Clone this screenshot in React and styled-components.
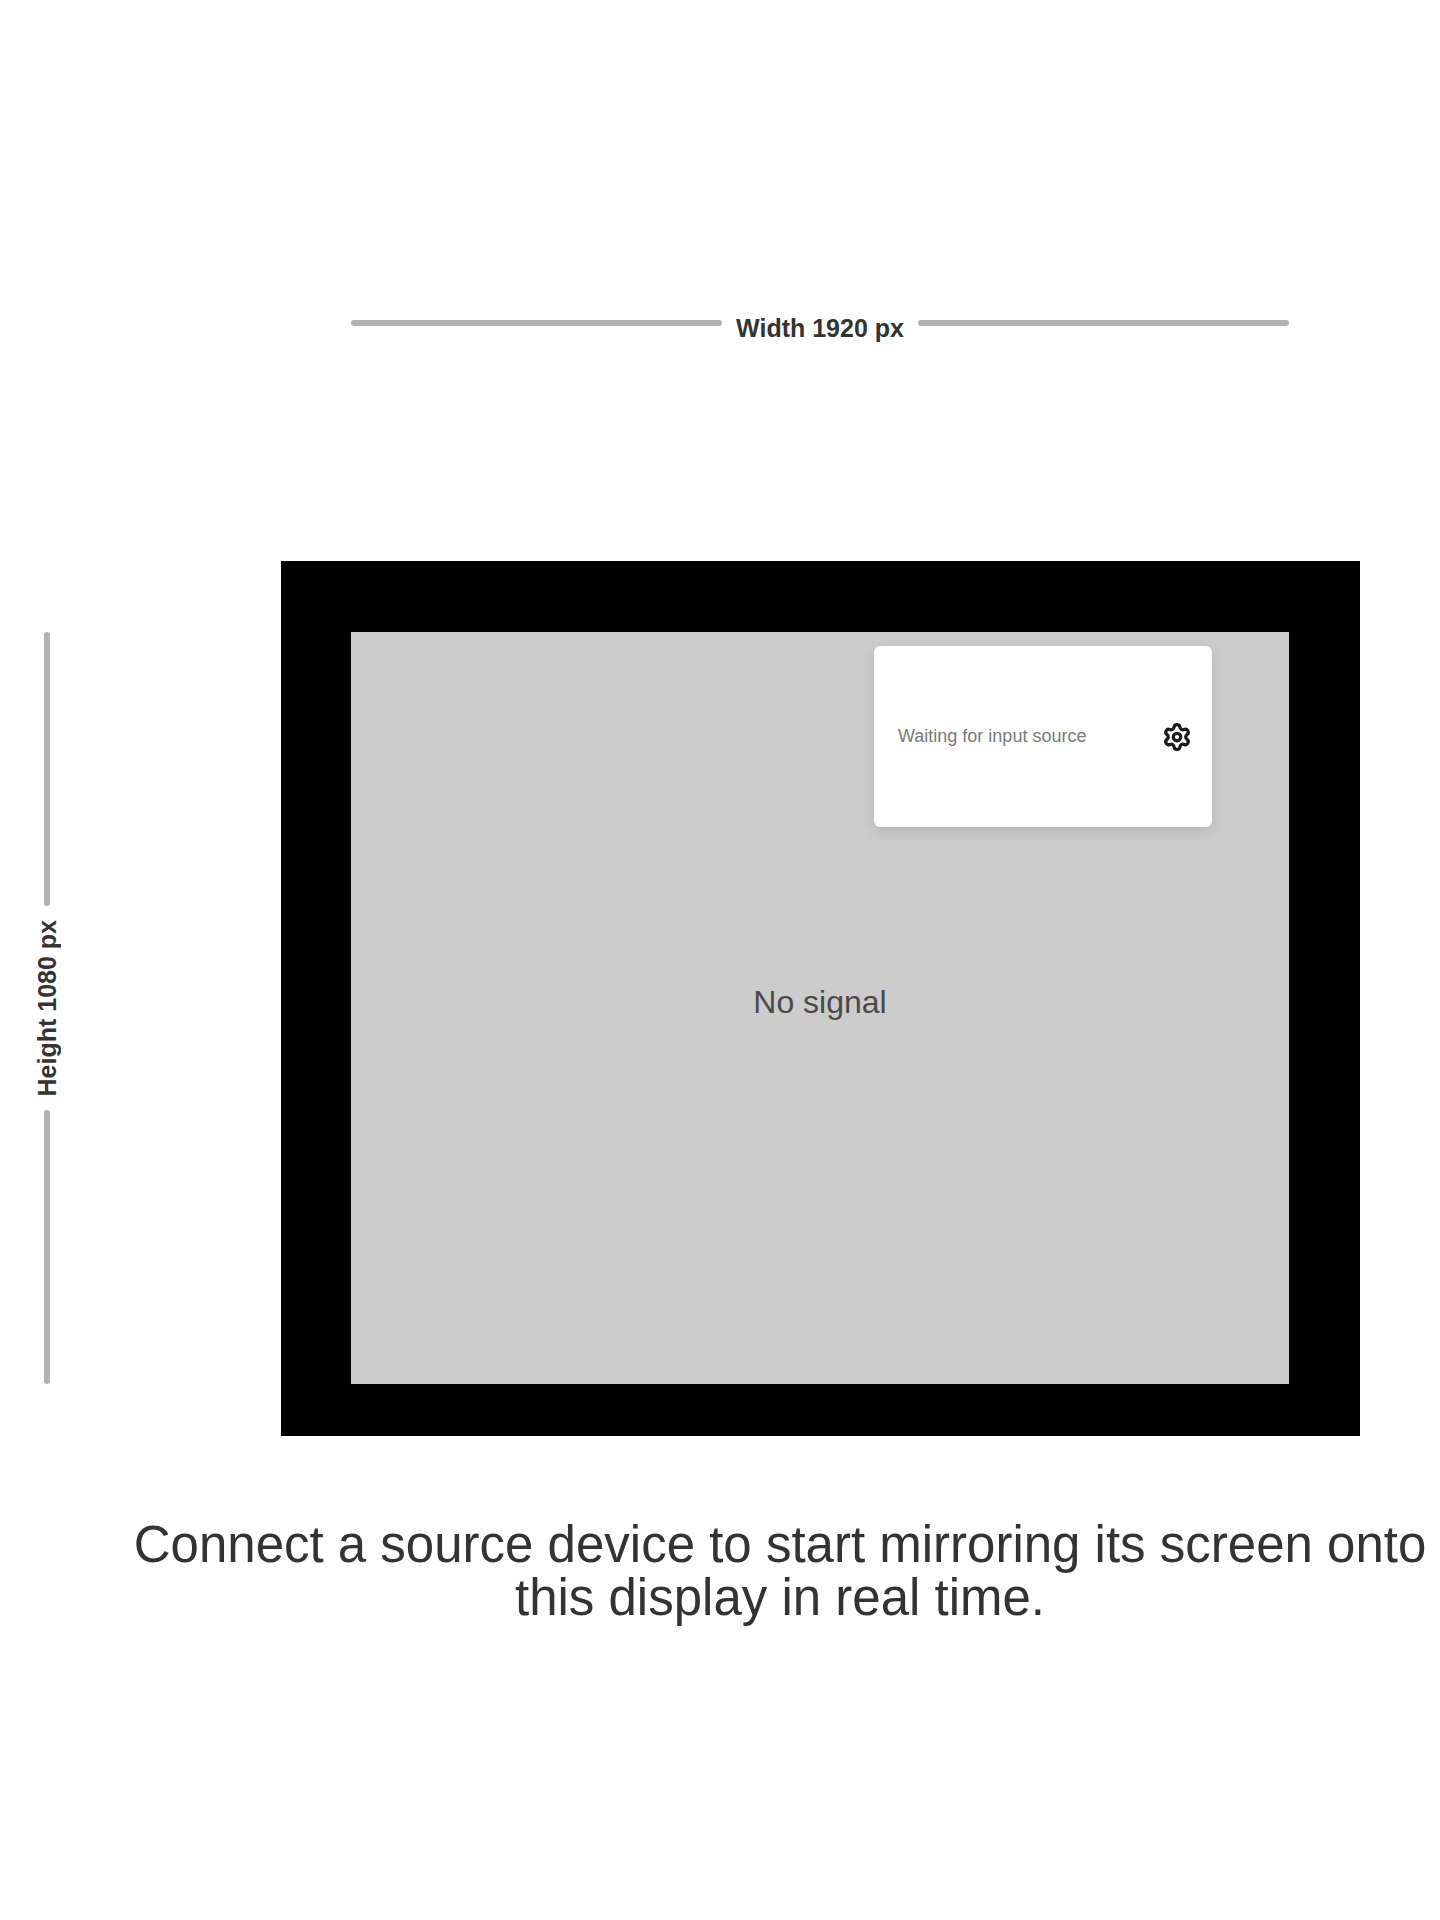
import React from 'react';
import styled, { createGlobalStyle } from 'styled-components';
import { Settings } from 'lucide-react';

const GlobalStyle = createGlobalStyle`
  html, body {
    margin: 0;
    padding: 0;
    background: #ffffff;
  }
  body {
    font-family: "Liberation Sans", Arial, sans-serif;
    color: #222;
  }
`;

const Page = styled.div`
  width: 1440px;
  min-height: 1920px;
  padding-top: 306px;
  box-sizing: border-box;
  overflow: hidden;
`;

const Stage = styled.div`
  display: grid;
  grid-template-columns: 281px 1079px;
  grid-template-rows: 34px auto;
  row-gap: 221px;
`;

const TopRuler = styled.div`
  grid-column: 2;
  grid-row: 1;
  display: flex;
  align-items: center;
  gap: 14px;
  padding: 0 71px 0 70px;
`;

const RulerLine = styled.div`
  flex: 1;
  height: ${(p) => (p.vertical ? 'auto' : '6px')};
  width: ${(p) => (p.vertical ? '6px' : 'auto')};
  background: #b2b2b2;
  border-radius: 3px;
`;

const RulerLabel = styled.span`
  font-size: 25px;
  font-weight: 700;
  line-height: 1;
  color: #333;
  white-space: nowrap;
  padding-top: ${(p) => (p.vertical ? '0' : '10px')};
  writing-mode: ${(p) => (p.vertical ? 'vertical-rl' : 'horizontal-tb')};
  transform: ${(p) => (p.vertical ? 'rotate(180deg)' : 'none')};
`;

const SideRuler = styled.div`
  grid-column: 1;
  grid-row: 2;
  padding: 71px 0 52px 30px;
  display: flex;
`;

const VTrack = styled.div`
  width: 34px;
  display: flex;
  flex-direction: column;
  align-items: center;
  gap: 14px;
`;

const Frame = styled.div`
  grid-column: 2;
  grid-row: 2;
  background: #000;
  padding: 71px 71px 52px 70px;
`;

const Screen = styled.div`
  position: relative;
  height: 752px;
  background: #cccccc;
  display: flex;
  align-items: center;
  justify-content: center;
`;

const NoSignal = styled.div`
  font-size: 32px;
  color: #4a4a4a;
  margin-top: -12px;
`;

const Popover = styled.div`
  position: absolute;
  top: 14px;
  right: 77px;
  width: 338px;
  height: 181px;
  box-sizing: border-box;
  padding: 0 20px 0 24px;
  background: #fff;
  border-radius: 6px;
  box-shadow: 0 4px 14px rgba(0, 0, 0, 0.12);
  display: flex;
  align-items: center;
  justify-content: space-between;
`;

const PopText = styled.span`
  font-size: 18px;
  color: #7a7a7a;
`;

const Caption = styled.p`
  margin: 82px 0 0 100px;
  width: 1360px;
  text-align: center;
  font-size: 51px;
  line-height: 53px;
  color: #333;
`;

export default function App() {
  return (
    <>
      <GlobalStyle />
      <Page>
        <Stage>
          <TopRuler>
            <RulerLine />
            <RulerLabel>Width 1920 px</RulerLabel>
            <RulerLine />
          </TopRuler>
          <SideRuler>
            <VTrack>
              <RulerLine vertical />
              <RulerLabel vertical>Height 1080 px</RulerLabel>
              <RulerLine vertical />
            </VTrack>
          </SideRuler>
          <Frame>
            <Screen>
              <Popover>
                <PopText>Waiting for input source</PopText>
                <Settings size={30} color="#1a1a1a" strokeWidth={2.6} />
              </Popover>
              <NoSignal>No signal</NoSignal>
            </Screen>
          </Frame>
        </Stage>
        <Caption>
          Connect a source device to start mirroring its screen onto
          <br />
          this display in real time.
        </Caption>
      </Page>
    </>
  );
}
